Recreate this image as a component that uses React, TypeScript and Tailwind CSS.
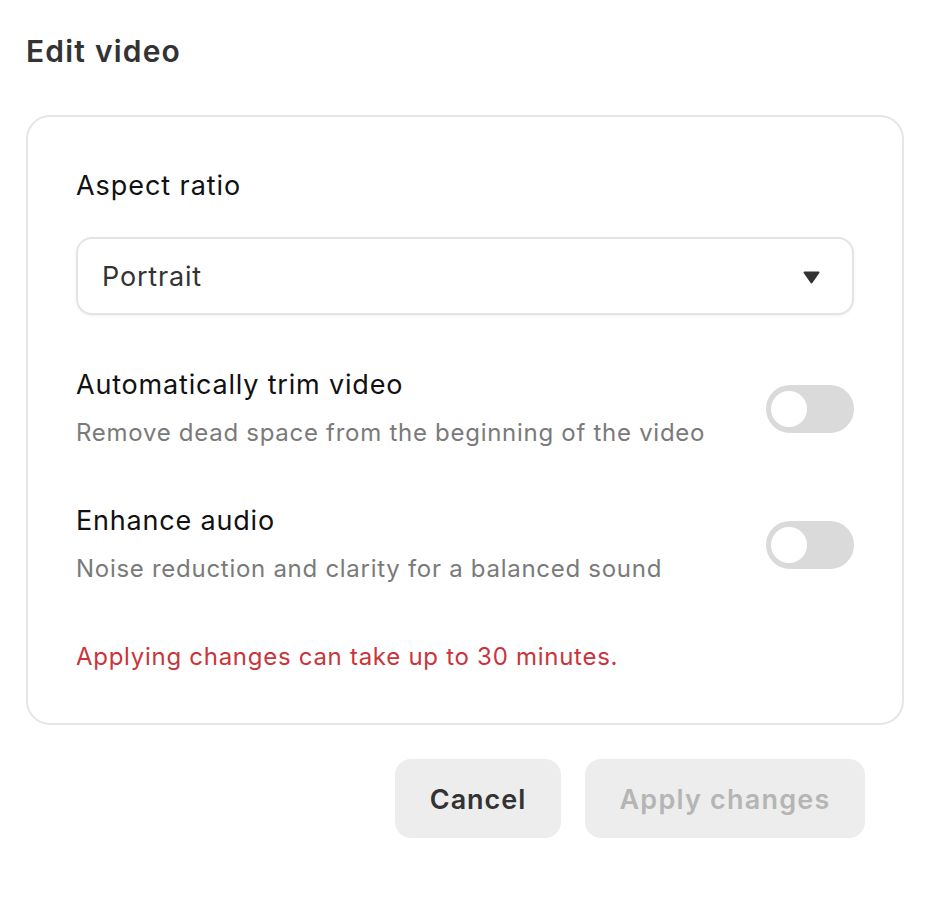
const font = { fontFamily: 'Inter, "Noto Sans", sans-serif' }

const Toggle = () => {
  return (
    <div className="relative h-[48px] w-[88px] shrink-0 rounded-full bg-[#dadada]">
      <div className="absolute left-[5px] top-[6px] h-[36px] w-[36px] rounded-full bg-white" />
    </div>
  )
}

const OptionRow = ({ title, subtitle }: { title: string; subtitle: string }) => {
  return (
    <div className="flex items-center justify-between">
      <div>
        <div className="text-[27px] leading-[32px] tracking-[0.03em] text-[#111]">{title}</div>
        <div className="mt-[16px] text-[24px] leading-[32px] tracking-[0.03em] text-[#7a7a7a]">{subtitle}</div>
      </div>
      <Toggle />
    </div>
  )
}

export default function App() {
  return (
    <div className="min-h-[904px] w-[928px] bg-white" style={font}>
      <div className="pl-[26px] pr-[24px] pt-[32px]">
        <h1 className="text-[30px] font-semibold leading-[38px] tracking-[0.04em] text-[#333]">Edit video</h1>

        <div className="mt-[45px] rounded-[24px] border-2 border-[#e6e6e6] px-[48px] pb-[50px] pt-[53px]">
          <div className="text-[27px] leading-[32px] tracking-[0.035em] text-[#111]">Aspect ratio</div>

          <div className="mt-[35px] flex h-[78px] items-center justify-between rounded-[16px] border-2 border-[#e4e4e4] bg-white pl-[24px] pr-[32px] pt-[2px] shadow-[0_1px_3px_rgba(0,0,0,0.06)]">
            <span className="text-[27px] tracking-[0.03em] text-[#333]">Portrait</span>
            <svg width="17" height="13" viewBox="0 0 17 13">
              <path d="M1.5 1.5 L15.5 1.5 L8.5 11.5 Z" fill="#333" stroke="#333" strokeWidth="2" strokeLinejoin="round" />
            </svg>
          </div>

          <div className="mt-[54px]">
            <OptionRow title="Automatically trim video" subtitle="Remove dead space from the beginning of the video" />
          </div>
          <div className="mt-[56px]">
            <OptionRow title="Enhance audio" subtitle="Noise reduction and clarity for a balanced sound" />
          </div>

          <div className="mt-[56px] text-[24px] leading-[32px] tracking-[0.03em] text-[#c9353b]">
            Applying changes can take up to 30 minutes.
          </div>
        </div>

        <div className="mt-[34px] flex justify-end gap-[24px] pr-[39px]">
          <button className="h-[79px] w-[166px] rounded-[16px] bg-[#ededed] pt-[3px] text-[27px] font-semibold tracking-[0.035em] text-[#333]">
            Cancel
          </button>
          <button className="h-[79px] w-[280px] rounded-[16px] bg-[#ededed] pt-[3px] text-[27px] font-semibold tracking-[0.045em] text-[#b5b5b5]">
            Apply changes
          </button>
        </div>
      </div>
    </div>
  )
}
